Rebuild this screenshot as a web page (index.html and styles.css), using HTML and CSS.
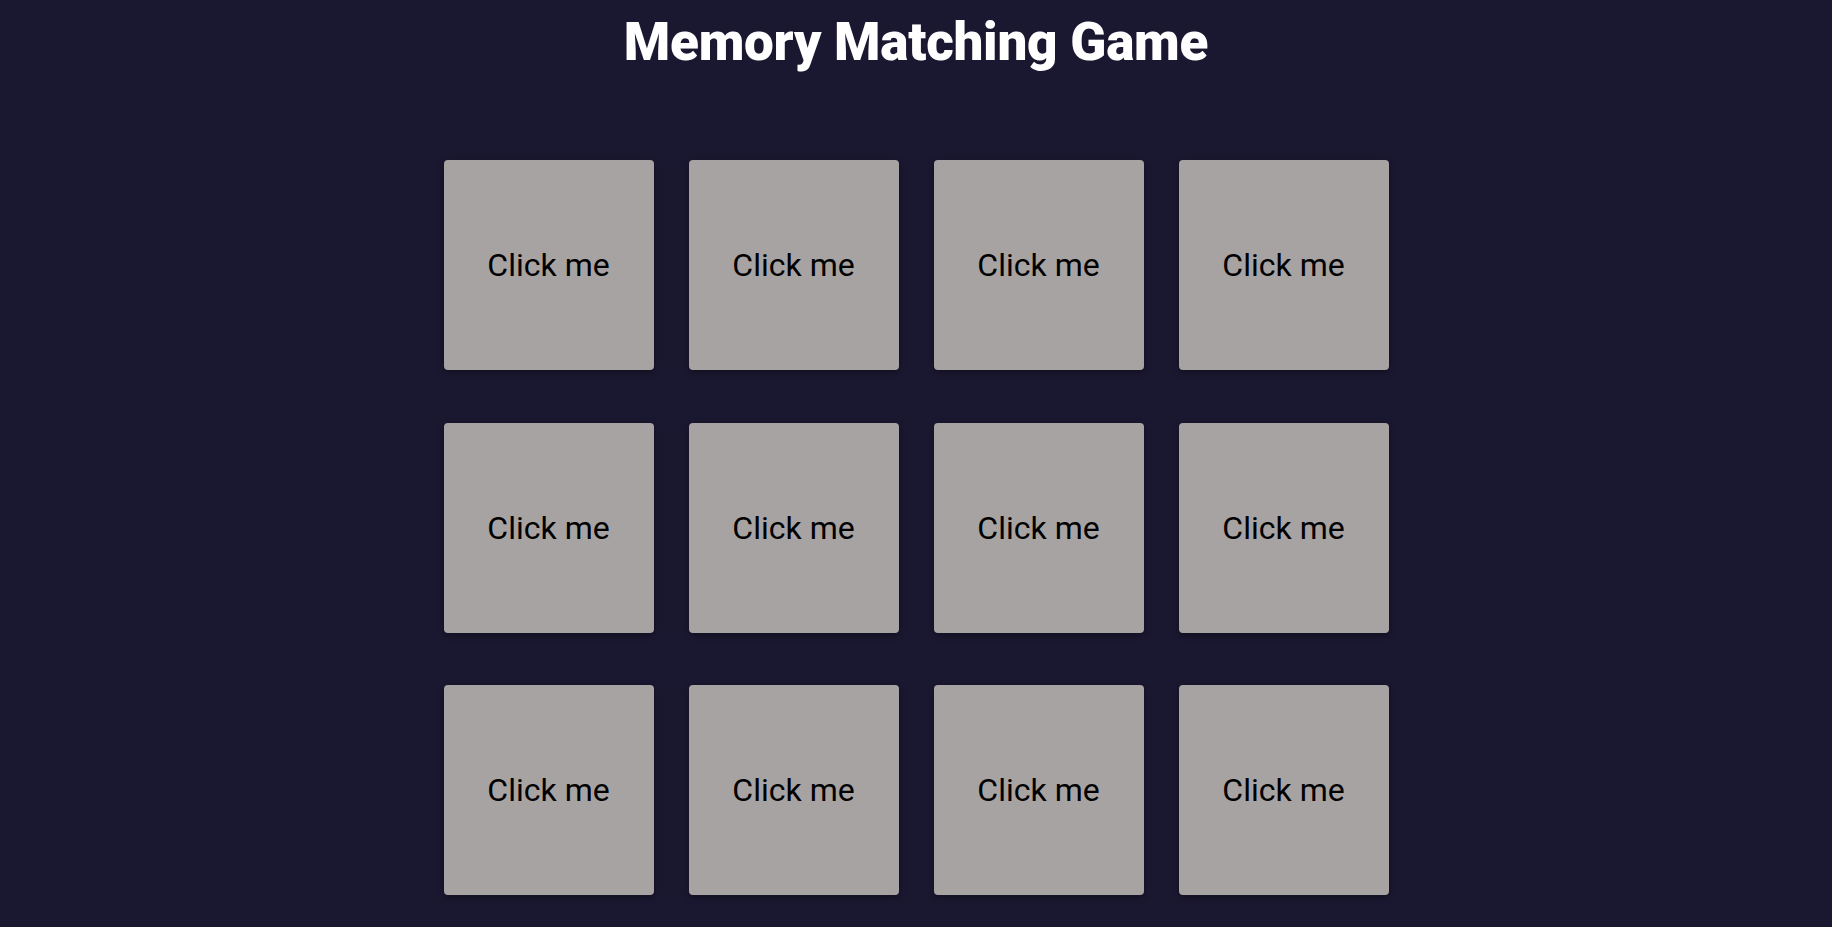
FILE: index.html
```html
<!DOCTYPE html>
<html>
<head>
<meta charset="utf-8">
<title>Memory Matching Game</title>
<link rel="stylesheet" href="styles.css">
</head>
<body>
<main class="page">
  <h1 class="title">Memory Matching Game</h1>
  <div class="board">
    <div class="card">Click me</div>
    <div class="card">Click me</div>
    <div class="card">Click me</div>
    <div class="card">Click me</div>
    <div class="card">Click me</div>
    <div class="card">Click me</div>
    <div class="card">Click me</div>
    <div class="card">Click me</div>
    <div class="card">Click me</div>
    <div class="card">Click me</div>
    <div class="card">Click me</div>
    <div class="card">Click me</div>
  </div>
</main>
</body>
</html>
```
FILE: styles.css
```css
html, body {
  margin: 0;
  padding: 0;
  background: #1a1730;
  height: 100%;
}
body {
  font-family: Roboto, "Liberation Sans", sans-serif;
  overflow: hidden;
}
.page {
  display: flex;
  flex-direction: column;
  align-items: center;
}
.title {
  margin: 11px 0 0;
  font-size: 53px;
  font-weight: 900;
  color: #ffffff;
  line-height: normal;
  letter-spacing: -0.25px;
}
.board {
  margin-top: 87px;
  display: grid;
  grid-template-columns: repeat(4, 210px);
  grid-auto-rows: 210px;
  column-gap: 35px;
  row-gap: 52.5px;
}
.card {
  background: #a8a3a3;
  border-radius: 4px;
  box-shadow: 0 2px 6px rgba(0, 0, 0, 0.35);
  display: flex;
  align-items: center;
  justify-content: center;
  font-size: 32px;
  color: #000000;
}
```
